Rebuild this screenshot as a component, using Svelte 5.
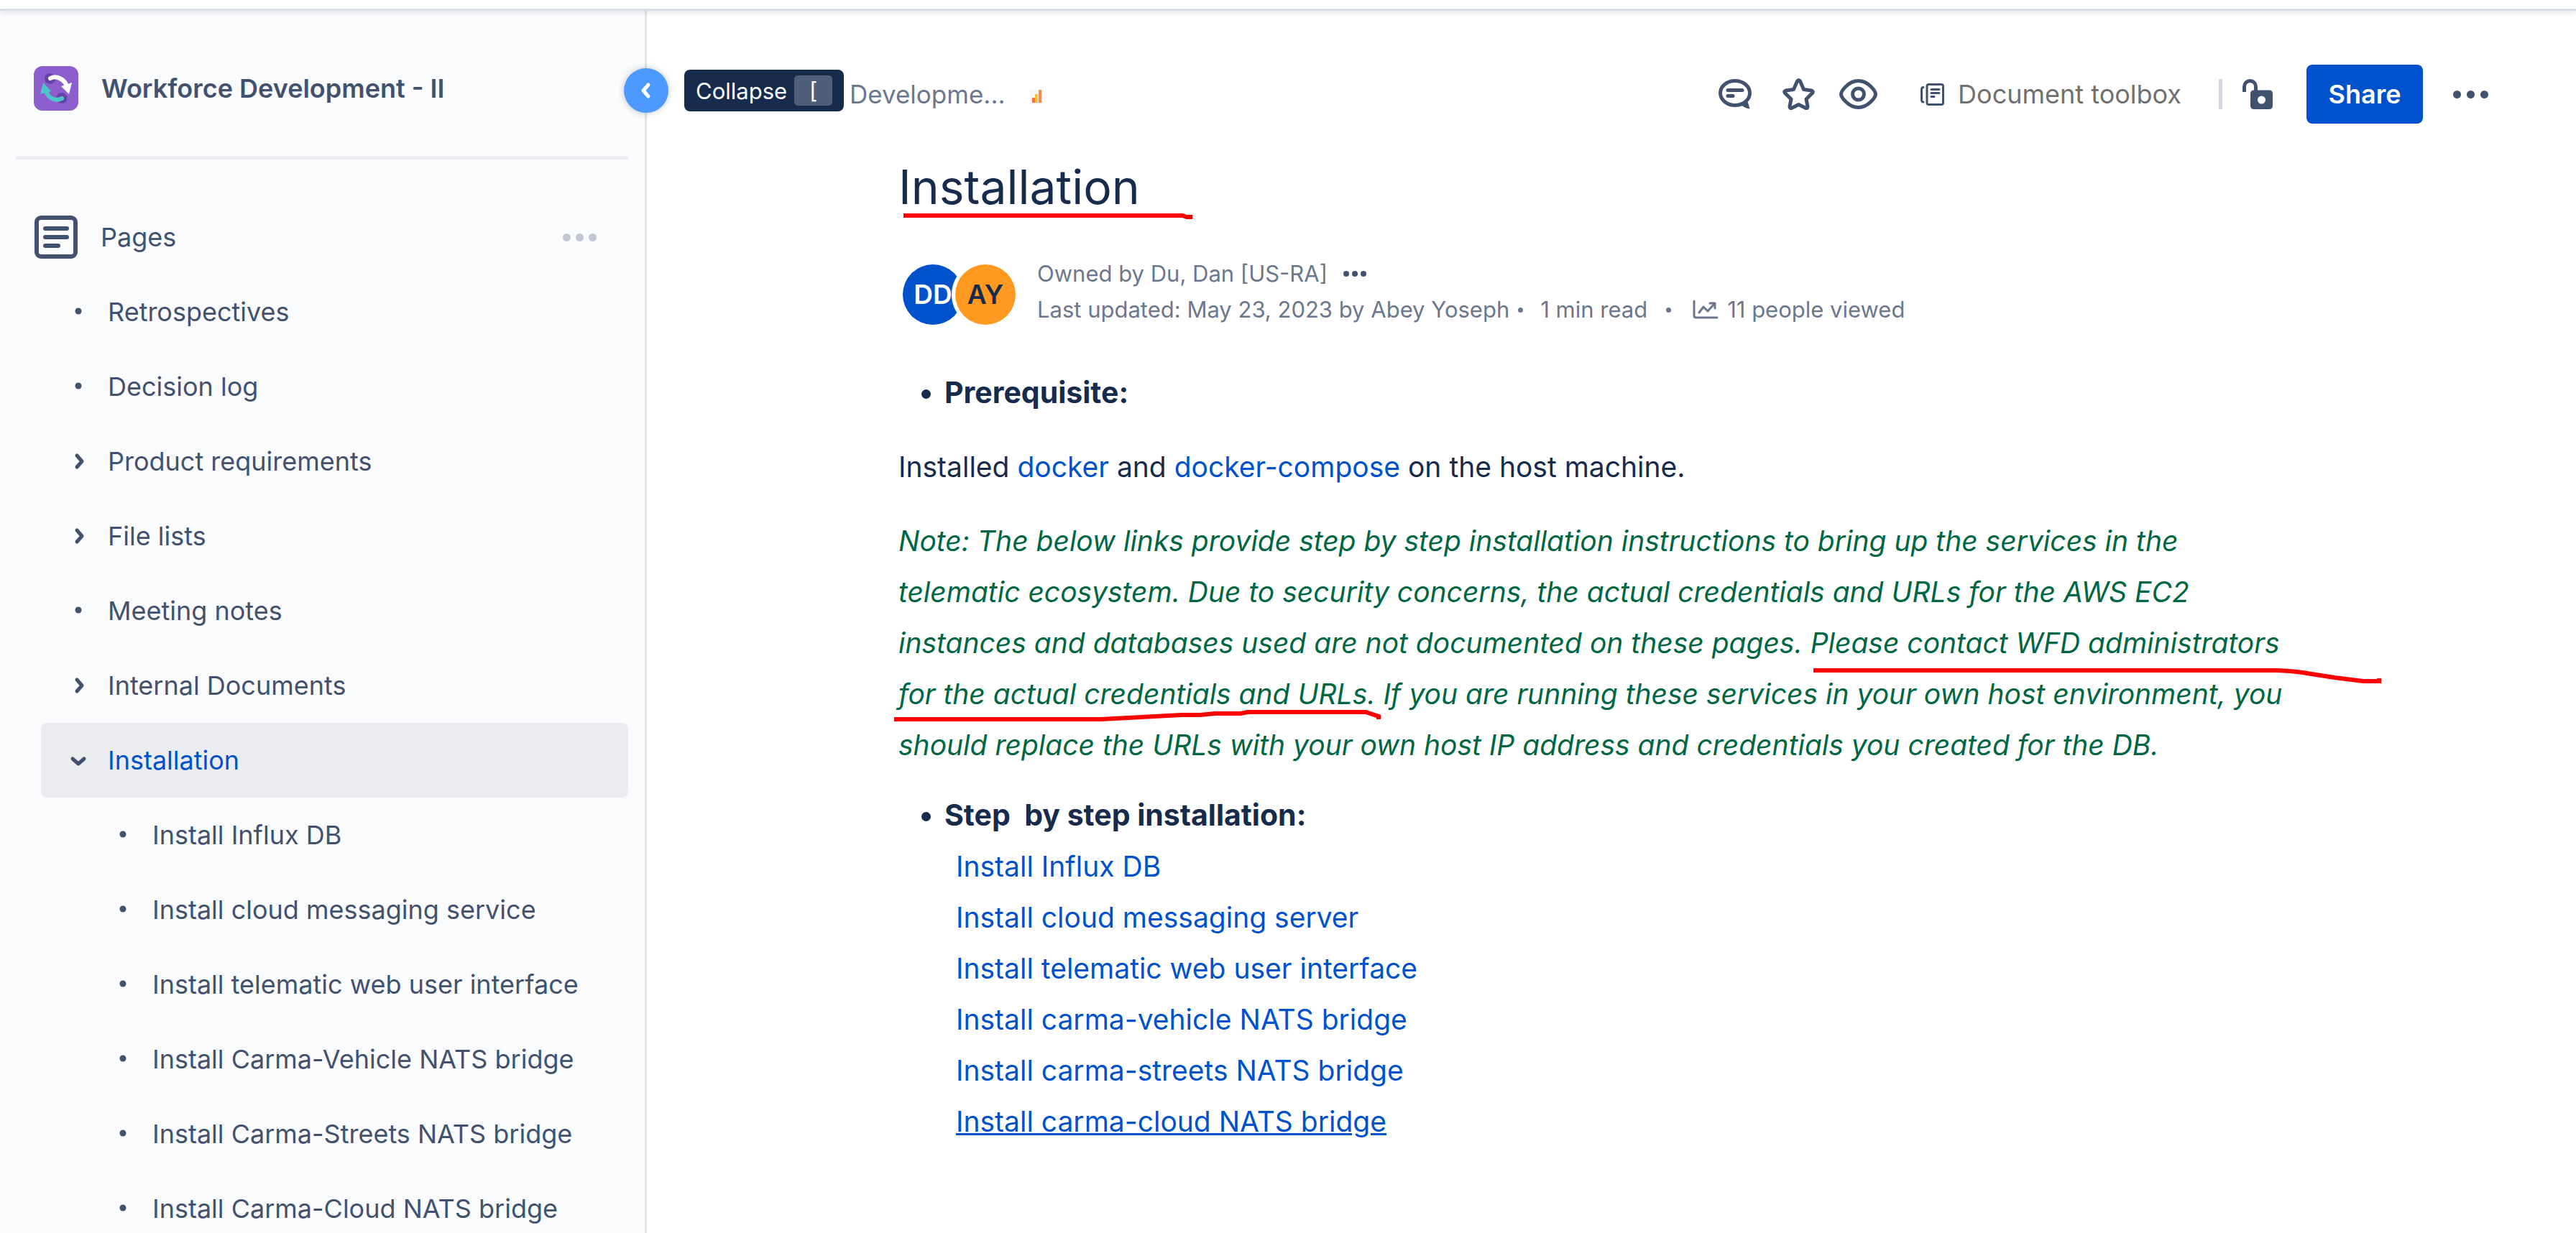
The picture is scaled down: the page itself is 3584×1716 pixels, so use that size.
<script>
  const pages = [
    { label: 'Retrospectives', kind: 'dot' },
    { label: 'Decision log', kind: 'dot' },
    { label: 'Product requirements', kind: 'closed' },
    { label: 'File lists', kind: 'closed' },
    { label: 'Meeting notes', kind: 'dot' },
    { label: 'Internal Documents', kind: 'closed' },
    { label: 'Installation', kind: 'open', current: true },
    { label: 'Install Influx DB', kind: 'dot', child: true },
    { label: 'Install cloud messaging service', kind: 'dot', child: true },
    { label: 'Install telematic web user interface', kind: 'dot', child: true },
    { label: 'Install Carma-Vehicle NATS bridge', kind: 'dot', child: true },
    { label: 'Install Carma-Streets NATS bridge', kind: 'dot', child: true },
    { label: 'Install Carma-Cloud NATS bridge', kind: 'dot', child: true }
  ];
  const steps = [
    'Install Influx DB',
    'Install cloud messaging server',
    'Install telematic web user interface',
    'Install carma-vehicle NATS bridge',
    'Install carma-streets NATS bridge',
    'Install carma-cloud NATS bridge'
  ];
</script>

<div class="app">
  <div class="topline"></div>
  <div class="shell">
    <aside class="side">
      <a class="space" href="#space">
        <svg class="logo" viewBox="0 0 62 62" aria-hidden="true">
          <rect width="62" height="62" rx="12" fill="#8d5fce" />
          <circle cx="22.500" cy="17.500" r="7.500" fill="#6544aa" />
          <circle cx="39" cy="44.500" r="7.500" fill="#6544aa" />
          <path d="M23 17C32 12 43 19 46 28" fill="none" stroke="#fff" stroke-width="6" stroke-linecap="round" />
          <path d="M38 28l15-5-4 16z" fill="#fff" />
          <path d="M39 45C30 50 19 44 17 34" fill="none" stroke="#4cc4c8" stroke-width="6" stroke-linecap="round" />
          <path d="M9 39l4-16 11 12z" fill="#4cc4c8" />
        </svg>
        <span>Workforce Development - II</span>
      </a>
      <hr />
      <div class="pages">
        <svg class="pageicon" viewBox="0 0 60 60" fill="none" stroke="#42526e" stroke-linecap="round" aria-hidden="true">
          <rect x="3" y="3" width="54" height="54" rx="6" stroke-width="6" />
          <path d="M15 18h30M15 30h30M15 42h18" stroke-width="6" />
        </svg>
        <span>Pages</span>
        <button class="more pale" aria-label="Page actions"><i></i><i></i><i></i></button>
      </div>
      <nav>
        {#each pages as p}
          <a href="#page" class="row" class:current={p.current} class:child={p.child}>
            <svg class="mark" viewBox="0 0 32 32" fill="none" stroke="#42526e" stroke-width="5" stroke-linecap="round" stroke-linejoin="round" aria-hidden="true">
              {#if p.kind === 'dot'}
                <circle cx="16" cy="15" r="4.500" fill="#42526e" stroke="none" />
              {:else if p.kind === 'closed'}
                <path d="M14 8l7 8-7 8" />
              {:else}
                <path d="M8 14l8 7 8-7" />
              {/if}
            </svg>
            <span>{p.label}</span>
          </a>
        {/each}
      </nav>
    </aside>

    <main>
      <div class="handle">
        <button class="collapse" aria-label="Collapse">
          <svg viewBox="0 0 62 62" fill="none" stroke="#fff" stroke-width="5" stroke-linecap="round" stroke-linejoin="round"><path d="M34 23l-7 8 7 8" /></svg>
        </button>
        <div class="tip" role="tooltip">Collapse <kbd>[</kbd></div>
      </div>
      <header>
        <div class="crumbs">
          <a href="#space">Developme...</a>
          <svg class="bars" viewBox="0 0 18 28" aria-hidden="true">
            <rect y="8" width="18" height="20" fill="#f4f5f7" />
            <rect x="3" y="19" width="4" height="7" fill="#ff7043" />
            <rect x="7" y="14" width="4" height="12" fill="#fcbf2e" />
            <rect x="12" y="8" width="4" height="18" fill="#f58b4c" />
          </svg>
        </div>
        <div class="tools">
          <button class="icon comment" aria-label="Comments">
            <svg viewBox="0 0 46 42" fill="none" stroke="#42526e" stroke-width="5" stroke-linecap="round">
              <ellipse cx="23" cy="19.500" rx="20.500" ry="17" />
              <path d="M13 15.500h20M13 23.500h7" />
              <path d="M32 36.500l8-7 3.500 12q-6-.5-11.500-5z" fill="#42526e" stroke="none" />
            </svg>
          </button>
          <button class="icon star" aria-label="Star">
            <svg viewBox="0 0 45 44" fill="none" stroke="#42526e" stroke-width="5" stroke-linejoin="round">
              <path d="M20.500 4q2-3 4 0l5 11.500 11 1.500q3 1 1 3.500l-8.500 8.500 2 10q0 3-2.500 2.500l-10-5-10 5q-2.500.5-2.500-2.500l2-10-8.500-8.500q-2-2.500 1-3.500l11-1.500z" />
            </svg>
          </button>
          <button class="icon eye" aria-label="Watch">
            <svg viewBox="0 0 53 42" fill="none" stroke="#42526e" stroke-width="5">
              <path d="M2.500 21c0-4 10-18.500 24-18.500S50.500 17 50.500 21s-10 18.500-24 18.500S2.500 25 2.500 21z" /><circle cx="26.500" cy="21" r="8" />
            </svg>
          </button>
          <button class="toolbox">
            <svg viewBox="0 0 33 31" fill="none" stroke="#42526e" stroke-width="3" stroke-linecap="round" stroke-linejoin="round">
              <rect x="9" y="1.500" width="22.500" height="28" rx="2.500" /><path d="M4 5.500q-2.500 0-2.500 3.500v13.500q0 3.500 2.500 3.500M15 8.500h11M15 13.500h11M15 18.500h4" />
            </svg>
            Document toolbox
          </button>
          <span class="rule"></span>
          <button class="icon lock" aria-label="Restrictions">
            <svg viewBox="0 0 42 42">
              <path d="M2.500 18v-7.500a8 8 0 0 1 16 0V18" fill="none" stroke="#42526e" stroke-width="5" />
              <path fill="#42526e" fill-rule="evenodd" d="M16 15.500h21q5 0 5 5V37q0 5-5 5H16q-5 0-5-5V20.500q0-5 5-5zm10.500 8a5.500 5.500 0 1 0 0 11 5.500 5.500 0 0 0 0-11z" />
            </svg>
          </button>
          <button class="share">Share</button>
          <button class="more" aria-label="More actions"><i></i><i></i><i></i></button>
        </div>
      </header>

      <article>
        <h1>Installation
          <svg class="ink ink-title" viewBox="0 0 402 10" fill="none" stroke="#f00" stroke-width="6"><path d="M0 3h388l6 2h8" /></svg>
        </h1>
        <div class="byline">
          <div class="avatars"><span class="dd">DD</span><span class="ay">AY</span></div>
          <div class="meta">
            <div>Owned by Du, Dan [US-RA]<button class="more small" aria-label="Owner details"><i></i><i></i><i></i></button></div>
            <div><span>Last updated: May 23, 2023 by Abey Yoseph</span><b class="sep near"></b><span>1 min read</span><b class="sep far"></b>
              <svg class="chart" viewBox="0 0 36 28" fill="none" stroke="#6b778c" stroke-width="3" stroke-linecap="round" stroke-linejoin="round" aria-hidden="true"><path d="M2 2v20q0 3 3 3h29M9 18l6-8 6 6 9-10M24 5h7v7" /></svg>
              <span>11 people viewed</span></div>
          </div>
        </div>

        <ul><li><strong>Prerequisite:</strong></li></ul>
        <p>Installed <a href="#docker">docker</a> and <a href="#compose">docker-compose</a> on the host machine.</p>
        <p class="note"><em>Note: The below links provide step by step installation instructions to bring up the services in the<br />telematic ecosystem. Due to security concerns, the actual credentials and URLs for the AWS EC2<br />instances and databases used are not documented on these pages. <span class="mark-a">Please contact WFD administrators<svg class="ink ink-a" viewBox="0 0 790 24" fill="none" stroke="#f00" stroke-width="6"><path d="M0 3h645q28 1 48 5l32 5 40 5h22v-4" /></svg></span><br /><span class="mark-b">for the actual credentials and URLs.<svg class="ink ink-b" viewBox="0 0 682 18" fill="none" stroke="#f00" stroke-width="6"><path d="M0 13h288l112-6h26l20-2h36l10-2h164l18 6v4" /></svg></span> If you are running these services in your own host environment, you<br />should replace the URLs with your own host IP address and credentials you created for the DB.</em></p>
        <ul>
          <li>
            <strong>Step&nbsp; by step installation:</strong>
            <div class="steps">
              {#each steps as s, i}
                <a href="#step" class:hovered={i === 5}>{s}</a>
              {/each}
            </div>
          </li>
        </ul>
      </article>
    </main>
  </div>
</div>

<style>
  :global(body) { background: #fff; }
  .app { height: 100vh; display: flex; flex-direction: column; overflow: hidden; font-family: Inter, "Liberation Sans", sans-serif; color: #172b4d; }
  a { color: #0052cc; text-decoration: none; }
  button { font: inherit; border: 0; background: none; padding: 0; margin: 0; display: flex; align-items: center; justify-content: center; }
  svg { display: block; flex: none; }
  .topline { height: 12px; flex: none; background: #fff; box-shadow: 0 3px 0 #dadfe6, 0 4px 8px rgba(9, 30, 66, 0.15); position: relative; z-index: 1; }
  .shell { flex: 1; min-height: 0; display: flex; }

  .side { box-sizing: border-box; width: 900px; flex: none; background: #fafbfc; border-right: 3px solid #e3e4e7; padding: 80px 23px 0 22px; color: #42526e; font-size: 36px; overflow: hidden; }
  .space { display: flex; align-items: center; gap: 32px; padding-left: 25px; height: 62px; color: #42526e; font-weight: 600; }
  .logo { width: 62px; height: 62px; }
  hr { border: 0; height: 5px; border-radius: 2px; background: #ebecf0; margin: 63px 0 78px; }
  .pages { display: flex; align-items: center; height: 60px; padding: 0 44px 0 26px; }
  .pageicon { width: 60px; height: 60px; margin-right: 32px; }
  .more { gap: 8px; }
  .more i { width: 11px; height: 11px; border-radius: 50%; background: #42526e; }
  .pale { margin-left: auto; gap: 7px; }
  .pale i { background: #c1c7d0; }
  nav { padding: 22px 0 0 35px; }
  .row { display: flex; align-items: center; height: 104px; padding-left: 36px; gap: 25px; border-radius: 8px; color: #42526e; white-space: nowrap; }
  .row.child { padding-left: 98px; }
  .row.current { background: #ebecf0; color: #0052cc; }
  .mark { width: 32px; height: 32px; }

  main { flex: 1; min-width: 0; position: relative; }
  .handle { position: absolute; top: 83px; left: -32px; display: flex; align-items: center; gap: 22px; }
  .collapse { width: 62px; height: 62px; border-radius: 50%; background: #4c9aff; box-shadow: 0 0 10px rgba(9, 30, 66, 0.25); }
  .collapse svg { width: 62px; height: 62px; }
  .tip { display: flex; align-items: center; gap: 10px; height: 58px; padding: 0 16px; border-radius: 8px; background: #172b4d; color: #fff; font-size: 31px; }
  kbd { font: inherit; width: 53px; height: 42px; line-height: 42px; text-align: center; border-radius: 5px; background: #505f79; }
  header { display: flex; align-items: center; justify-content: space-between; height: 82px; padding: 78px 122px 0 282px; }
  .crumbs { display: flex; align-items: center; gap: 34px; font-size: 35px; }
  .crumbs a { color: #6b778c; }
  .bars { width: 18px; height: 28px; }
  .tools { display: flex; align-items: center; font-size: 36px; color: #707070; }
  .icon svg { width: 100%; height: 100%; }
  .comment { width: 46px; height: 42px; margin-right: 43px; }
  .star { width: 45px; height: 44px; margin-right: 34px; }
  .eye { width: 53px; height: 42px; margin-right: 60px; }
  .toolbox { color: #707070; gap: 19px; }
  .toolbox svg { width: 33px; height: 31px; }
  .rule { width: 5px; height: 42px; background: #d3d7de; margin: 0 28px 0 52px; }
  .lock { width: 42px; height: 42px; margin-right: 47px; }
  .share { width: 162px; height: 82px; border-radius: 8px; background: #0052cc; color: #fff; font-size: 36px; font-weight: 600; margin-right: 42px; }

  article { width: 1960px; margin-left: 350px; font-size: 39px; line-height: 71px; }
  h1 { position: relative; width: max-content; margin: 44px 0 0; font-size: 66px; line-height: 88px; font-weight: 400; }
  .ink { position: absolute; overflow: visible; }
  .ink-title { left: 7px; top: 81px; width: 402px; height: 10px; }
  .byline { display: flex; align-items: flex-start; gap: 30px; margin-top: 52px; color: #6b778c; font-size: 31px; line-height: 50px; }
  .avatars { display: flex; padding: 12px 0 0 6px; }
  .avatars span { width: 84px; height: 84px; border-radius: 50%; line-height: 84px; text-align: center; font-size: 37px; font-weight: 600; }
  .dd { background: #0052cc; color: #fff; }
  .ay { background: #ff991f; color: #172b4d; margin-left: -11px; box-shadow: 0 0 0 5px #fff; }
  .meta > div { display: flex; align-items: center; }
  .small { margin-left: 22px; gap: 4px; }
  .small i { width: 8px; height: 8px; }
  .sep { width: 7px; height: 7px; border-radius: 50%; background: #6b778c; }
  .near { margin: 0 24px 0 12px; }
  .far { margin: 0 30px 0 26px; }
  .chart { width: 36px; height: 28px; margin-right: 12px; }
  ul { margin: 0; padding-left: 64px; }
  .byline + ul { margin-top: 55px; }
  p { margin: 32px 0 0; }
  .note { color: #006644; white-space: nowrap; margin-bottom: 27px; }
  .mark-a, .mark-b { position: relative; }
  .ink-a { left: 4px; bottom: -36px; width: 790px; height: 24px; }
  .ink-b { left: -6px; bottom: -17px; width: 682px; height: 18px; }
  strong { font-size: 41px; font-weight: 700; }
  .steps { display: flex; flex-direction: column; align-items: flex-start; padding-left: 16px; }
  .hovered { text-decoration: underline; }
</style>
